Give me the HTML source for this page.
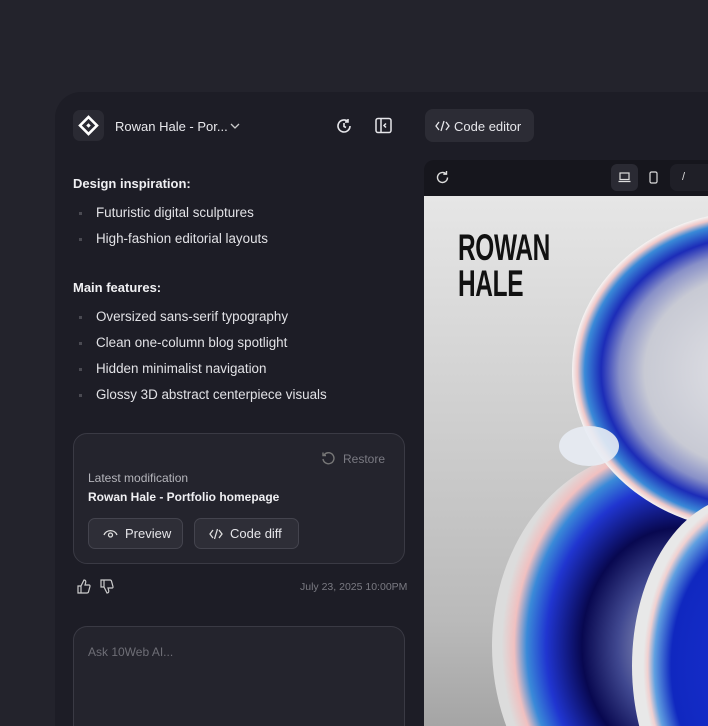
<!DOCTYPE html>
<html><head><meta charset="utf-8"><style>
*{margin:0;padding:0;box-sizing:border-box}
html{width:708px;height:726px;overflow:hidden}
body{width:708px;height:726px;overflow:hidden;background:#23232c;font-family:"Liberation Sans",sans-serif;color:#e6e6ea;position:relative}
.panel{position:absolute;left:55px;top:92px;width:653px;height:634px;background:#1d1d26;border-radius:26px 0 0 0}
.abs{position:absolute}
.logo{left:73px;top:110px;width:31px;height:31px;border-radius:7px;background:#2a2a33}
.h{font-weight:bold;font-size:13px;color:#f0f0f3}
.li{font-size:13.4px;color:#e2e2e6}
.dot{position:absolute;width:3px;height:3px;background:#4a4a52;left:-17px;top:7px}
.card{left:73px;top:433px;width:332px;height:131px;border:1.5px solid #3a3a44;border-radius:14px;background:#24242d}
.btn{position:absolute;height:31px;border:1px solid #44444e;border-radius:7px;background:#2e2e37;font-size:13px;color:#e6e6ea;display:flex;align-items:center;gap:7px;padding-left:14px}
.ask{left:73px;top:626px;width:332px;height:100px;border:1.5px solid #3a3a44;border-bottom:none;border-radius:14px 14px 0 0;background:#24242d}
</style></head><body>
<div class="panel"></div>
<div class="abs logo"><svg width="31" height="31" viewBox="0 0 31 31"><g transform="translate(15.5 15.5) rotate(45)"><rect x="-6" y="-6" width="12" height="12" fill="none" stroke="#fff" stroke-width="2.6"/><rect x="-1.6" y="-1.6" width="3.2" height="3.2" fill="#fff"/></g></svg></div>
<div class="abs" style="left:115px;top:119px;font-size:13px;color:#e8e8ec">Rowan Hale - Por...</div>
<svg class="abs" style="left:230px;top:122px" width="10" height="8"><path d="M1 2l4 4 4-4" stroke="#ccc" fill="none" stroke-width="1.3"/></svg>
<svg class="abs" style="left:335px;top:117px" width="18" height="18" viewBox="0 0 18 18" fill="none" stroke="#e6e6ea" stroke-width="1.6"><path d="M15 9a6 6 0 1 1-2-4.5"/><path d="M13 2v3h-3"/><path d="M9 6v3.5l2 1"/></svg>
<svg class="abs" style="left:375px;top:117px" width="17" height="17" viewBox="0 0 17 17" fill="none" stroke="#e6e6ea" stroke-width="1.5"><rect x="1" y="1.5" width="15" height="14" rx="2"/><path d="M6 1.5v14M11 6.5l-2 2 2 2"/></svg>
<div class="abs" style="left:425px;top:109px;width:109px;height:33px;border-radius:8px;background:#2c2c35;font-size:13px;color:#e6e6ea;padding:10px 0 0 29px">Code editor</div>
<svg class="abs" style="left:435px;top:119px" width="15" height="14" viewBox="0 0 15 14" fill="none" stroke="#e6e6ea" stroke-width="1.3"><path d="M4 3L1 7l3 4M11 3l3 4-3 4M9 2L6 12"/></svg>

<div class="abs h" style="left:73px;top:176px">Design inspiration:</div>
<div class="abs li" style="left:96px;top:205px"><span class="dot"></span>Futuristic digital sculptures</div>
<div class="abs li" style="left:96px;top:231px"><span class="dot"></span>High-fashion editorial layouts</div>
<div class="abs h" style="left:73px;top:280px">Main features:</div>
<div class="abs li" style="left:96px;top:309px"><span class="dot"></span>Oversized sans-serif typography</div>
<div class="abs li" style="left:96px;top:335px"><span class="dot"></span>Clean one-column blog spotlight</div>
<div class="abs li" style="left:96px;top:361px"><span class="dot"></span>Hidden minimalist navigation</div>
<div class="abs li" style="left:96px;top:387px"><span class="dot"></span>Glossy 3D abstract centerpiece visuals</div>

<div class="abs card">
<svg class="abs" style="left:247px;top:17px" width="15" height="15" viewBox="0 0 15 15" fill="none" stroke="#777" stroke-width="1.4"><path d="M3 4a5.5 5.5 0 1 1-1 4"/><path d="M2 1.5v3h3"/></svg>
<div class="abs" style="left:269px;top:18px;font-size:12px;color:#7a7a82">Restore</div>
<div class="abs" style="left:14px;top:37px;font-size:12px;color:#b5b5bb">Latest modification</div>
<div class="abs" style="left:14px;top:56px;font-size:12px;font-weight:bold;color:#f0f0f3">Rowan Hale - Portfolio homepage</div>
<div class="btn" style="left:14px;top:84px;width:95px"><svg width="15" height="11" viewBox="0 0 15 11" fill="none" stroke="#ddd" stroke-width="1.3"><path d="M1 7a7 7 0 0 1 13 0"/><circle cx="7.5" cy="7" r="2"/></svg>Preview</div>
<div class="btn" style="left:120px;top:84px;width:105px"><svg width="14" height="12" viewBox="0 0 14 12" fill="none" stroke="#ddd" stroke-width="1.3"><path d="M4 2L1 6l3 4M10 2l3 4-3 4M8.5 1l-3 10"/></svg>Code diff</div>
</div>
<svg class="abs" style="left:77px;top:579px" width="14" height="15" viewBox="0 0 14 15" fill="none" stroke="#ccc" stroke-width="1.2"><path d="M1 7h3v7H1zM4 7l3-6c1.5 0 2 1 1.7 2.5L8 6h4a1 1 0 0 1 1 1.3l-1.5 5.5a1.5 1.5 0 0 1-1.4 1.2H4"/></svg>
<svg class="abs" style="left:100px;top:579px" width="14" height="15" viewBox="0 0 14 15" fill="none" stroke="#ccc" stroke-width="1.2"><path d="M1 1h3v7H1zM4 8l3 6c1.5 0 2-1 1.7-2.5L8 9h4a1 1 0 0 0 1-1.3L11.5 2.2A1.5 1.5 0 0 0 10.1 1H4"/></svg>
<div class="abs" style="left:300px;top:581px;font-size:10.5px;color:#7a7a82">July 23, 2025 10:00PM</div>
<div class="abs ask"><div class="abs" style="left:14px;top:18px;font-size:12px;color:#6e6e76">Ask 10Web AI...</div></div>

<div class="abs" style="left:424px;top:160px;width:284px;height:566px;background:#16161d;border-radius:10px 0 0 0;overflow:hidden">
<svg class="abs" style="left:11px;top:10px" width="15" height="15" viewBox="0 0 15 15" fill="none" stroke="#ddd" stroke-width="1.4"><path d="M12.5 7.5a5 5 0 1 1-1.5-3.6"/><path d="M11.5 1v3.2H8.3"/></svg>
<div class="abs" style="left:187px;top:4px;width:27px;height:27px;border-radius:6px;background:#2a2a33"></div>
<svg class="abs" style="left:194px;top:12px" width="13" height="11" viewBox="0 0 13 11" fill="none" stroke="#ddd" stroke-width="1.2"><rect x="2" y="1" width="9" height="6.5"/><path d="M0.5 9.5h12"/></svg>
<svg class="abs" style="left:225px;top:11px" width="9" height="13" viewBox="0 0 9 13" fill="none" stroke="#ddd" stroke-width="1.2"><rect x="1" y="1" width="7" height="11" rx="1.5"/></svg>
<div class="abs" style="left:246px;top:4px;width:60px;height:27px;border-radius:7px;background:#1f1f27;font-size:11px;color:#ddd;padding:7px 0 0 12px">/</div>
<div class="abs" style="left:0;top:36px;width:284px;height:530px;background:linear-gradient(180deg,#e6e6e6 0%,#d0d0d0 40%,#bababa 80%,#a5a5a5 100%);overflow:hidden">
<svg width="284" height="530" style="position:absolute;left:0;top:0">
<defs>
<radialGradient id="b1" cx="0.5" cy="0.5" r="0.5"><stop offset="0" stop-color="#e4e4e8"/><stop offset="0.6" stop-color="#c8cad4"/><stop offset="0.74" stop-color="#8890c8"/><stop offset="0.84" stop-color="#1c2cb8"/><stop offset="0.93" stop-color="#3a8ad8"/><stop offset="0.97" stop-color="#f0c8c8"/><stop offset="1" stop-color="#f4f4f4"/></radialGradient>
<radialGradient id="b2" cx="0.58" cy="0.5" r="0.55"><stop offset="0" stop-color="#c8ccd8"/><stop offset="0.35" stop-color="#404890"/><stop offset="0.55" stop-color="#080850"/><stop offset="0.75" stop-color="#2035d0"/><stop offset="0.86" stop-color="#3a8ad8"/><stop offset="0.93" stop-color="#f0c0c0"/><stop offset="1" stop-color="#dcdcdc"/></radialGradient>
<radialGradient id="b3" cx="0.55" cy="0.5" r="0.5"><stop offset="0" stop-color="#1a30d0"/><stop offset="0.75" stop-color="#1028c0"/><stop offset="0.9" stop-color="#60a0e0"/><stop offset="0.96" stop-color="#f0d0d0"/><stop offset="1" stop-color="#e8e8e8"/></radialGradient>
</defs>
<ellipse cx="230" cy="450" rx="162" ry="195" fill="url(#b2)"/>
<ellipse cx="330" cy="175" rx="182" ry="160" fill="url(#b1)"/>
<ellipse cx="165" cy="250" rx="30" ry="20" fill="#e8ecf4" opacity="0.9"/>
<ellipse cx="320" cy="470" rx="112" ry="170" fill="url(#b3)"/>
</svg>
<div class="abs" style="left:34px;top:34px;font-family:'Liberation Sans Narrow','Liberation Sans',sans-serif;font-weight:bold;font-size:37px;line-height:36px;color:#111;transform:scaleX(0.66);transform-origin:left;letter-spacing:-0.5px">ROWAN<br>HALE</div>
</div>
</div>
</body></html>
